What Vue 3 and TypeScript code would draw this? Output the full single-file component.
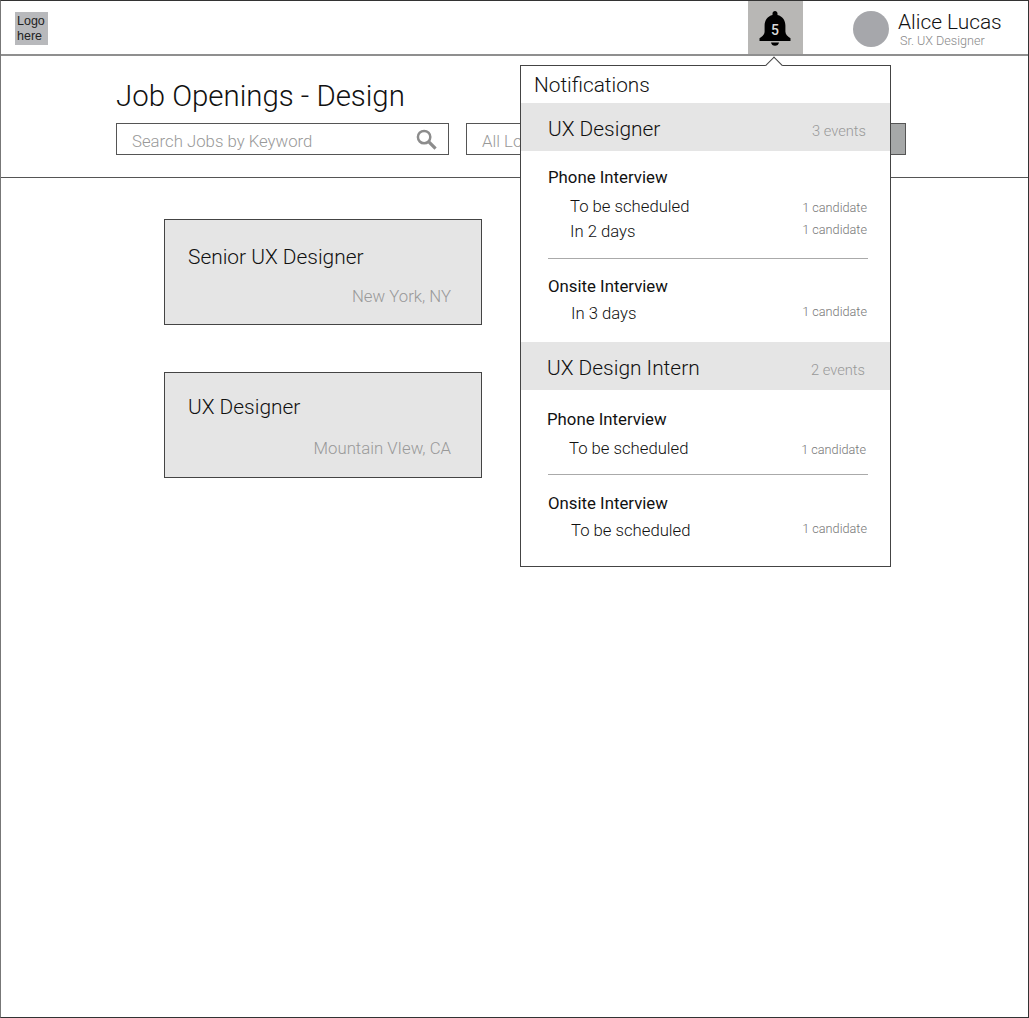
<script setup lang="ts">
interface EventRow {
  label: string;
  count: string;
  raised?: boolean;
}

interface InterviewGroup {
  title: string;
  rows: EventRow[];
}

interface JobGroup {
  title: string;
  events: string;
  groups: InterviewGroup[];
}

const jobs = [
  { title: 'Senior UX Designer', location: 'New York, NY' },
  { title: 'UX Designer', location: 'Mountain VIew, CA' },
];

const notifications: JobGroup[] = [
  {
    title: 'UX Designer',
    events: '3 events',
    groups: [
      {
        title: 'Phone Interview',
        rows: [
          { label: 'To be scheduled', count: '1 candidate' },
          { label: 'In 2 days', count: '1 candidate', raised: true },
        ],
      },
      {
        title: 'Onsite Interview',
        rows: [{ label: 'In 3 days', count: '1 candidate', raised: true }],
      },
    ],
  },
  {
    title: 'UX Design Intern',
    events: '2 events',
    groups: [
      {
        title: 'Phone Interview',
        rows: [{ label: 'To be scheduled', count: '1 candidate' }],
      },
      {
        title: 'Onsite Interview',
        rows: [{ label: 'To be scheduled', count: '1 candidate', raised: true }],
      },
    ],
  },
];
</script>

<template>
  <div class="page">
    <header class="topbar">
      <div class="logo">Logo here</div>
      <div class="bell-box">
        <svg class="bell" viewBox="0 0 32 36" width="32" height="36">
          <path d="M16 0c-1.400 0-2.500 1-2.500 2.400v1.500C8.500 5.200 5.600 9.200 5.600 14.500v6c0 2.800-2 4.800-5.100 6.800V30h31v-2.700c-3.100-2-5.100-4-5.100-6.800v-6c0-5.300-2.900-9.300-7.900-10.600V2.400C18.500 1 17.400 0 16 0z" fill="#000" />
          <path d="M12 31.500h8c-.3 2-1.900 3.300-4 3.300s-3.700-1.300-4-3.300z" fill="#000" />
        </svg>
        <span class="bell-count">5</span>
      </div>
      <div class="user">
        <div class="avatar"></div>
        <div class="user-text">
          <div class="user-name">Alice Lucas</div>
          <div class="user-role">Sr. UX Designer</div>
        </div>
      </div>
    </header>

    <section class="filters">
      <h1 class="heading">Job Openings - Design</h1>
      <div class="filter-row">
        <div class="field field-search">
          <span class="field-text">Search Jobs by Keyword</span>
          <svg viewBox="0 0 22 22" width="21" height="21">
            <circle cx="8.500" cy="8.500" r="6.500" fill="none" stroke="#8c8c8c" stroke-width="2.600" />
            <path d="M13.500 13.500L20.500 20.500" stroke="#8c8c8c" stroke-width="3.400" />
          </svg>
        </div>
        <div class="field field-location"><span class="field-text">All Lo</span></div>
        <div class="filter-button"></div>
      </div>
    </section>

    <main class="job-list">
      <article v-for="job in jobs" :key="job.title" class="job-card">
        <div class="job-title">{{ job.title }}</div>
        <div class="job-location">{{ job.location }}</div>
      </article>
    </main>

    <aside class="panel">
      <span class="panel-arrow"></span>
      <div class="panel-title">Notifications</div>
      <div v-for="job in notifications" :key="job.title" class="panel-job">
        <div class="panel-job-head">
          <span class="panel-job-title">{{ job.title }}</span>
          <span class="panel-job-events">{{ job.events }}</span>
        </div>
        <div v-for="group in job.groups" :key="group.title" class="panel-group">
          <div class="panel-group-title">{{ group.title }}</div>
          <div v-for="row in group.rows" :key="row.label" class="panel-row">
            <span class="panel-row-label">{{ row.label }}</span>
            <span class="panel-row-count" :class="{ raised: row.raised }">{{ row.count }}</span>
          </div>
        </div>
      </div>
    </aside>
  </div>
</template>

<style scoped>
.page {
  position: relative;
  box-sizing: border-box;
  width: 1029px;
  height: 1018px;
  border: 1px solid #333;
  border-left-color: #777;
  background: #fff;
  font-family: Roboto, "Liberation Sans", sans-serif;
  font-weight: 300;
  color: #111;
  overflow: hidden;
}

.topbar {
  display: flex;
  align-items: flex-start;
  height: 53px;
  border-bottom: 2px solid #8f8f8f;
  padding-left: 14px;
}

.logo {
  width: 33px;
  height: 33px;
  margin-top: 11px;
  padding: 2px 0 0 2px;
  box-sizing: border-box;
  background: #b8b9bc;
  font-family: "Liberation Sans", sans-serif;
  font-weight: 400;
  font-size: 12.500px;
  line-height: 14.500px;
  color: #222;
}

.bell-box {
  position: relative;
  display: flex;
  justify-content: center;
  width: 55px;
  height: 53px;
  margin-left: 700px;
  padding: 10px 1px 0 0;
  box-sizing: border-box;
  background: #b8b7b5;
}

.bell-count {
  position: absolute;
  top: 20px;
  left: 0;
  width: 54px;
  text-align: center;
  color: #d8d8d8;
  font-size: 14px;
  font-weight: 500;
  line-height: 18px;
}

.user {
  display: flex;
  margin-left: 50px;
  padding-top: 10px;
}

.avatar {
  width: 36px;
  height: 36px;
  border-radius: 50%;
  background: #a6a7ab;
}

.user-text {
  margin-left: 9px;
}

.user-name {
  font-size: 20.900px;
  line-height: 23px;
}

.user-role {
  margin-left: 2px;
  font-size: 12.600px;
  line-height: 14px;
  color: #8a8a8a;
}

.filters {
  box-sizing: border-box;
  height: 122px;
  border-bottom: 1px solid #555;
  padding: 20px 0 0 115px;
}

.heading {
  margin: 0;
  font-size: 29.400px;
  font-weight: 300;
  line-height: 40px;
}

.filter-row {
  display: flex;
  margin-top: 7px;
}

.field {
  display: flex;
  align-items: center;
  justify-content: space-between;
  box-sizing: border-box;
  height: 32px;
  border: 1px solid #555;
  padding: 0 11px 0 15px;
  font-size: 16.750px;
  color: #999;
}

.field-text {
  margin-top: 4px;
}

.field-search {
  width: 333px;
}

.field-location {
  width: 350px;
  margin-left: 17px;
}

.filter-button {
  width: 90px;
  height: 32px;
  box-sizing: border-box;
  border: 1px solid #555;
  background: #a6a8a8;
}

.job-list {
  display: flex;
  flex-direction: column;
  gap: 47px;
  padding: 41px 0 0 163px;
}

.job-card {
  box-sizing: border-box;
  width: 318px;
  height: 106px;
  padding: 22px 30px 0 23px;
  border: 1px solid #444;
  background: #e5e5e5;
}

.job-card + .job-card {
  padding-top: 19px;
}

.job-title {
  font-size: 20.900px;
  line-height: 30px;
}

.job-location {
  margin-top: 13px;
  text-align: right;
  font-size: 16.750px;
  line-height: 22px;
  color: #999;
}

.job-card + .job-card .job-location {
  margin-top: 15px;
}

.panel {
  position: absolute;
  top: 64px;
  left: 519px;
  box-sizing: border-box;
  width: 371px;
  height: 502px;
  border: 1px solid #444;
  background: #fff;
}

.panel-arrow {
  position: absolute;
  top: -7px;
  left: 247px;
  width: 11px;
  height: 11px;
  border-top: 1px solid #444;
  border-left: 1px solid #444;
  background: #fff;
  transform: rotate(45deg);
}

.panel-title {
  height: 37px;
  padding-left: 13px;
  font-size: 20.800px;
  line-height: 38px;
}

.panel-job-head {
  display: flex;
  align-items: center;
  justify-content: space-between;
  height: 48px;
  padding: 0 24px 0 27px;
  background: #e5e5e5;
}

.panel-job + .panel-job .panel-job-head {
  padding: 0 25px 0 26px;
}

.panel-job-title {
  margin-top: 4px;
  font-size: 20.900px;
}

.panel-job-events {
  margin-top: 8px;
  font-size: 14.700px;
  color: #999;
}

.panel-group {
  margin: 0 22px 0 27px;
  padding: 16px 0 15px;
}

.panel-group + .panel-group {
  padding: 17px 0 16px;
  border-top: 1px solid #aaa;
}

.panel-job + .panel-job .panel-group:nth-child(2) {
  margin: 0 23px 0 26px;
  padding: 19px 0 14px;
}

.panel-job + .panel-job .panel-group + .panel-group {
  padding-top: 18px;
}

.panel-group-title {
  font-size: 16.800px;
  font-weight: 400;
  line-height: 20px;
  margin-bottom: 6px;
}

.panel-group + .panel-group .panel-group-title {
  margin-bottom: 5px;
}

.panel-row {
  display: flex;
  align-items: center;
  justify-content: space-between;
  height: 25px;
  padding: 0 1px 0 22px;
}

.panel-group + .panel-group .panel-row {
  padding-left: 23px;
}

.panel-row-label {
  font-size: 16.700px;
}

.panel-group:nth-child(2) .panel-row-label {
  margin-top: 2px;
}

.panel-row-count {
  margin-top: 4px;
  font-size: 12.700px;
  color: #777;
}

.panel-row-count.raised {
  margin-top: -2px;
}

.panel-group + .panel-group .panel-row-count.raised {
  margin-top: -4px;
}
</style>
